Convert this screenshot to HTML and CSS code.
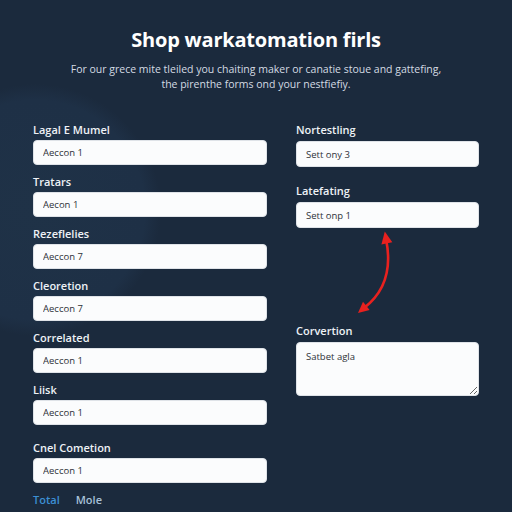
FILE: index.html
```html
<!DOCTYPE html>
<html lang="en">
<head>
  <meta charset="UTF-8">
  <meta name="viewport" content="width=device-width, initial-scale=1">
  <title>Shop warkatomation firls</title>
  <link rel="stylesheet" href="styles.css">
</head>
<body>
  <div class="page">
    <header class="intro">
      <h1>Shop warkatomation firls</h1>
      <p>For our grece mite tleiled you chaiting maker or canatie stoue and gattefing,<br>the pirenthe forms ond your nestfiefiy.</p>
    </header>

    <div class="form-grid">
      <div class="col">
        <div class="field">
          <label>Lagal E Mumel</label>
          <input value="Aeccon 1">
        </div>
        <div class="field">
          <label>Tratars</label>
          <input value="Aecon 1">
        </div>
        <div class="field">
          <label>Rezeflelies</label>
          <input value="Aeccon 7">
        </div>
        <div class="field">
          <label>Cleoretion</label>
          <input value="Aeccon 7">
        </div>
        <div class="field">
          <label>Correlated</label>
          <input value="Aeccon 1">
        </div>
        <div class="field">
          <label>Liisk</label>
          <input value="Aeccon 1">
        </div>
        <div class="field last">
          <label>Cnel Cometion</label>
          <input value="Aeccon 1">
        </div>
        <div class="tabs">
          <span class="tab-on">Total</span>
          <span>Mole</span>
        </div>
      </div>

      <div class="col col-right">
        <div class="field">
          <label>Nortestling</label>
          <input value="Sett ony 3">
        </div>
        <div class="field">
          <label>Latefating</label>
          <input value="Sett onp 1">
        </div>
        <svg class="link-arrow" width="183" height="95" viewBox="0 0 183 95">
          <path d="M90 11 C96 40 90 63 68 80" fill="none" stroke="#e8211f" stroke-width="2.6" stroke-linecap="round"/>
          <polygon points="88.8,3.5 96.3,14.3 85.4,16.4" fill="#e8211f"/>
          <polygon points="62,85 67,73.7 73.6,82.1" fill="#e8211f"/>
        </svg>
        <div class="field">
          <label>Corvertion</label>
          <textarea>Satbet agla</textarea>
        </div>
      </div>
    </div>
  </div>
</body>
</html>
```

FILE: styles.css
```css
body {
  margin: 0;
  min-height: 100vh;
  font-family: "Open Sans", "Liberation Sans", sans-serif;
  color: #e9eef4;
  background-color: #1b2a3d;
  background-image: radial-gradient(circle at 35px 210px, #1f3247 0, #1e3046 110px, rgba(27,42,61,0) 126px);
}
.page {
  padding: 0 0 0 33px;
  width: 446px;
}
.intro {
  text-align: center;
  width: 446px;
  padding-top: 26px;
}
.intro h1 {
  margin: 0;
  font-size: 20px;
  line-height: 28px;
  font-weight: 700;
  color: #fff;
  letter-spacing: -0.2px;
}
.intro p {
  margin: 8px 0 0 0;
  font-size: 10.5px;
  line-height: 15px;
  color: #d4dbe3;
}
.form-grid {
  display: grid;
  grid-template-columns: 234px 183px;
  column-gap: 29px;
  margin-top: 30px;
}
.field {
  display: flex;
  flex-direction: column;
  margin-bottom: 9px;
}
.field.last {
  padding-top: 6px;
}
label {
  font-size: 11px;
  line-height: 16px;
  font-weight: 600;
  color: #eef2f6;
  margin-bottom: 2px;
}
input, textarea {
  box-sizing: border-box;
  height: 25px;
  width: 100%;
  border: 1px solid #dfe3e8;
  border-radius: 4px;
  background: #fbfcfd;
  padding: 0 9px;
  font-family: "Open Sans", "Liberation Sans", sans-serif;
  font-size: 9.5px;
  color: #2d3138;
}
.col-right label {
  margin-bottom: 3px;
}
.col-right input {
  height: 26px;
}
.col-right .field:first-child {
  margin-bottom: 16px;
}
.col-right .field:nth-child(2) {
  margin-bottom: 0;
}
.link-arrow {
  display: block;
}
textarea {
  height: 54px;
  padding: 7px 9px;
  resize: vertical;
  line-height: 14px;
}
.tabs {
  display: flex;
  gap: 16px;
  font-size: 11px;
  line-height: 16px;
  font-weight: 600;
  color: #a8c1d8;
  margin-top: 4px;
}
.tab-on {
  color: #3c8fd4;
}
```
